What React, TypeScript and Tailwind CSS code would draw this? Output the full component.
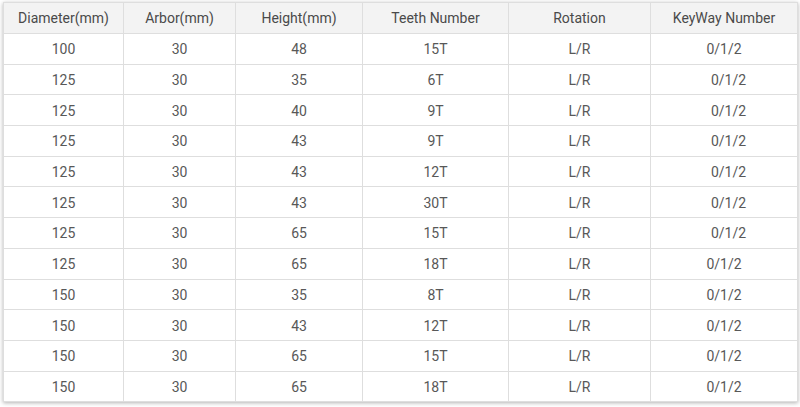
const columns = [
  { label: 'Diameter(mm)', width: 'w-[120px]' },
  { label: 'Arbor(mm)', width: 'w-[112px]' },
  { label: 'Height(mm)', width: 'w-[127px]' },
  { label: 'Teeth Number', width: 'w-[146px]' },
  { label: 'Rotation', width: 'w-[142px]' },
  { label: 'KeyWay Number', width: 'w-[147px]' },
];

// last flag: keyway value sits a few px right of centre in the source
const rows: [string, string, string, string, string, string, boolean][] = [
  ['100', '30', '48', '15T', 'L/R', '0/1/2', false],
  ['125', '30', '35', '6T', 'L/R', '0/1/2', true],
  ['125', '30', '40', '9T', 'L/R', '0/1/2', true],
  ['125', '30', '43', '9T', 'L/R', '0/1/2', true],
  ['125', '30', '43', '12T', 'L/R', '0/1/2', true],
  ['125', '30', '43', '30T', 'L/R', '0/1/2', true],
  ['125', '30', '65', '15T', 'L/R', '0/1/2', true],
  ['125', '30', '65', '18T', 'L/R', '0/1/2', false],
  ['150', '30', '35', '8T', 'L/R', '0/1/2', false],
  ['150', '30', '43', '12T', 'L/R', '0/1/2', false],
  ['150', '30', '65', '15T', 'L/R', '0/1/2', false],
  ['150', '30', '65', '18T', 'L/R', '0/1/2', false],
];

export default function App() {
  return (
    <div className="h-[407px] w-[800px] overflow-hidden bg-white pl-[3px] pr-[3px] pt-[2px] font-['Roboto',sans-serif]">
      <table className="w-[794px] table-fixed border-collapse bg-white shadow-[0_1px_4px_rgba(0,0,0,0.3)]">
        <thead>
          <tr className="h-[31px] bg-[#f3f3f3]">
            {columns.map((col) => (
              <th
                key={col.label}
                className={`${col.width} border border-[#dedede] pt-[1px] text-center text-[14px] font-normal text-[#4a4a4a]`}
              >
                {col.label}
              </th>
            ))}
          </tr>
        </thead>
        <tbody>
          {rows.map((row, i) => (
            <tr key={i} className="h-[30.7px]">
              {row.slice(0, 5).map((cell, j) => (
                <td key={j} className="border border-[#dedede] pt-[2px] text-center text-[14px] text-[#585858]">
                  {cell}
                </td>
              ))}
              <td
                className={`border border-[#dedede] pt-[2px] text-center text-[14px] text-[#585858] ${row[6] ? 'pl-[9px]' : ''}`}
              >
                {row[5]}
              </td>
            </tr>
          ))}
        </tbody>
      </table>
    </div>
  );
}
